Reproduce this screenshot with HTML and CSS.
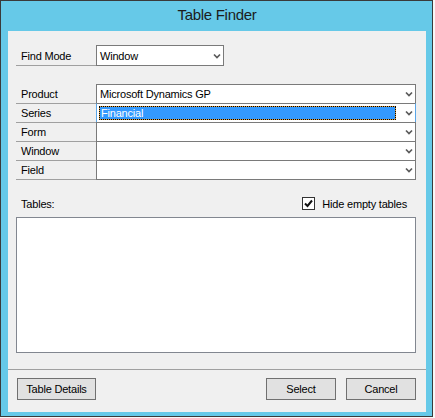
FILE: index.html
```html
<!DOCTYPE html>
<html lang="en">

<head>
    <meta charset="UTF-8" />
    <title>Table Finder</title>
    <link rel="stylesheet" href="styles.css">
</head>

<body>
    <div class="window">
        <div class="titlebar">Table Finder</div>
        <div class="client">
            <div class="find-row">
                <div class="label">Find Mode</div>
                <div class="combo find-combo">
                    <span class="value">Window</span>
                    <span class="arrow"><svg width="8" height="6" viewBox="0 0 8 6"><polyline points="1,1.5 4,4.5 7,1.5" /></svg></span>
                </div>
            </div>

            <div class="fields">
                <div class="field-row">
                    <div class="label">Product</div>
                    <div class="combo">
                        <span class="value">Microsoft Dynamics GP</span>
                        <span class="arrow"><svg width="8" height="6" viewBox="0 0 8 6"><polyline points="1,1.5 4,4.5 7,1.5" /></svg></span>
                    </div>
                </div>
                <div class="field-row">
                    <div class="label">Series</div>
                    <div class="combo focused">
                        <span class="value selected">Financial</span>
                        <span class="arrow"><svg width="8" height="6" viewBox="0 0 8 6"><polyline points="1,1.5 4,4.5 7,1.5" /></svg></span>
                    </div>
                </div>
                <div class="field-row">
                    <div class="label">Form</div>
                    <div class="combo">
                        <span class="value"></span>
                        <span class="arrow"><svg width="8" height="6" viewBox="0 0 8 6"><polyline points="1,1.5 4,4.5 7,1.5" /></svg></span>
                    </div>
                </div>
                <div class="field-row">
                    <div class="label">Window</div>
                    <div class="combo">
                        <span class="value"></span>
                        <span class="arrow"><svg width="8" height="6" viewBox="0 0 8 6"><polyline points="1,1.5 4,4.5 7,1.5" /></svg></span>
                    </div>
                </div>
                <div class="field-row">
                    <div class="label">Field</div>
                    <div class="combo">
                        <span class="value"></span>
                        <span class="arrow"><svg width="8" height="6" viewBox="0 0 8 6"><polyline points="1,1.5 4,4.5 7,1.5" /></svg></span>
                    </div>
                </div>
            </div>

            <div class="tables-head">
                <span class="tables-label">Tables:</span>
                <label class="check">
                    <span class="box"><svg width="11" height="11" viewBox="0 0 11 11"><polyline points="2,5.5 4.5,8 9,2.5" /></svg></span>
                    <span>Hide empty tables</span>
                </label>
            </div>
            <div class="listbox"></div>

            <div class="separator"></div>

            <div class="buttons">
                <button class="btn details">Table Details</button>
                <div class="right-buttons">
                    <button class="btn">Select</button>
                    <button class="btn">Cancel</button>
                </div>
            </div>
        </div>
    </div>
</body>

</html>
```

FILE: styles.css
```css
* {
    margin: 0;
    padding: 0;
    box-sizing: border-box;
    font-family: 'Liberation Sans', Arial, sans-serif;
}

body {
    background: #f7f7f7;
    font-size: 11px;
    color: #000;
}

.window {
    width: 433px;
    height: 417px;
    border: 1px solid #3a3a3a;
    background: #66c9e8;
    padding: 0 6px 4px 7px;
    display: flex;
    flex-direction: column;
}

.titlebar {
    height: 30px;
    line-height: 28px;
    text-align: center;
    font-size: 15px;
    letter-spacing: -0.3px;
    color: #1c1c1c;
}

.client {
    flex: 1;
    background: #f0f0f0;
    padding: 14px 10px 0 8px;
    display: flex;
    flex-direction: column;
    letter-spacing: -0.2px;
}

.label {
    width: 80px;
    border-bottom: 1px solid #a0a0a0;
    padding-left: 5px;
    display: flex;
    align-items: center;
}

.combo {
    background: #fff;
    border: 1px solid #7a7a7a;
    display: flex;
    align-items: stretch;
}

.combo .value {
    flex: 1;
    margin: 2px 1px 2px 2px;
    display: flex;
    align-items: center;
    padding-left: 1px;
    white-space: nowrap;
}

.combo .arrow {
    width: 18px;
    display: flex;
    align-items: center;
    justify-content: flex-end;
    padding-right: 2px;
}

.arrow polyline {
    fill: none;
    stroke: #5a5a5a;
    stroke-width: 1.7;
}

.find-row {
    display: flex;
    height: 21px;
}

.find-row .label {
    padding-top: 2px;
}

.find-combo {
    width: 128px;
}

.fields {
    margin-top: 18px;
}

.field-row {
    display: flex;
    height: 20px;
}

.field-row + .field-row {
    margin-top: -1px;
}

.field-row .combo {
    flex: 1;
}

.combo.focused {
    border-left-color: #5aa6e8;
    border-right-color: #5aa6e8;
}

.value.selected {
    background: #3399ff;
    color: #fff;
    border: 1px solid #e0a040;
    outline: 1px dotted #000;
    outline-offset: -1px;
    padding-left: 1px;
}

.tables-head {
    margin-top: 17px;
    height: 20px;
    display: flex;
    justify-content: space-between;
    align-items: flex-start;
    padding-left: 5px;
    padding-right: 9px;
}

.tables-label {
    line-height: 14px;
}

.check {
    display: flex;
    align-items: center;
    gap: 7px;
}

.check .box {
    width: 13px;
    height: 13px;
    border: 1px solid #333;
    background: #fff;
    display: flex;
    align-items: center;
    justify-content: center;
}

.box polyline {
    fill: none;
    stroke: #111;
    stroke-width: 2;
}

.listbox {
    height: 136px;
    background: #fff;
    border: 1px solid #828790;
}

.separator {
    margin: 16px -10px 0 -8px;
    height: 1px;
    background: #a0a0a0;
}

.buttons {
    margin-top: 8px;
    display: flex;
    justify-content: space-between;
    padding-left: 1px;
}

.right-buttons {
    display: flex;
    gap: 10px;
}

.btn {
    height: 22px;
    width: 70px;
    background: #e1e1e1;
    border: 1px solid #707070;
    font-size: 11px;
    letter-spacing: -0.2px;
    color: #000;
}

.btn.details {
    width: 79px;
}
```
